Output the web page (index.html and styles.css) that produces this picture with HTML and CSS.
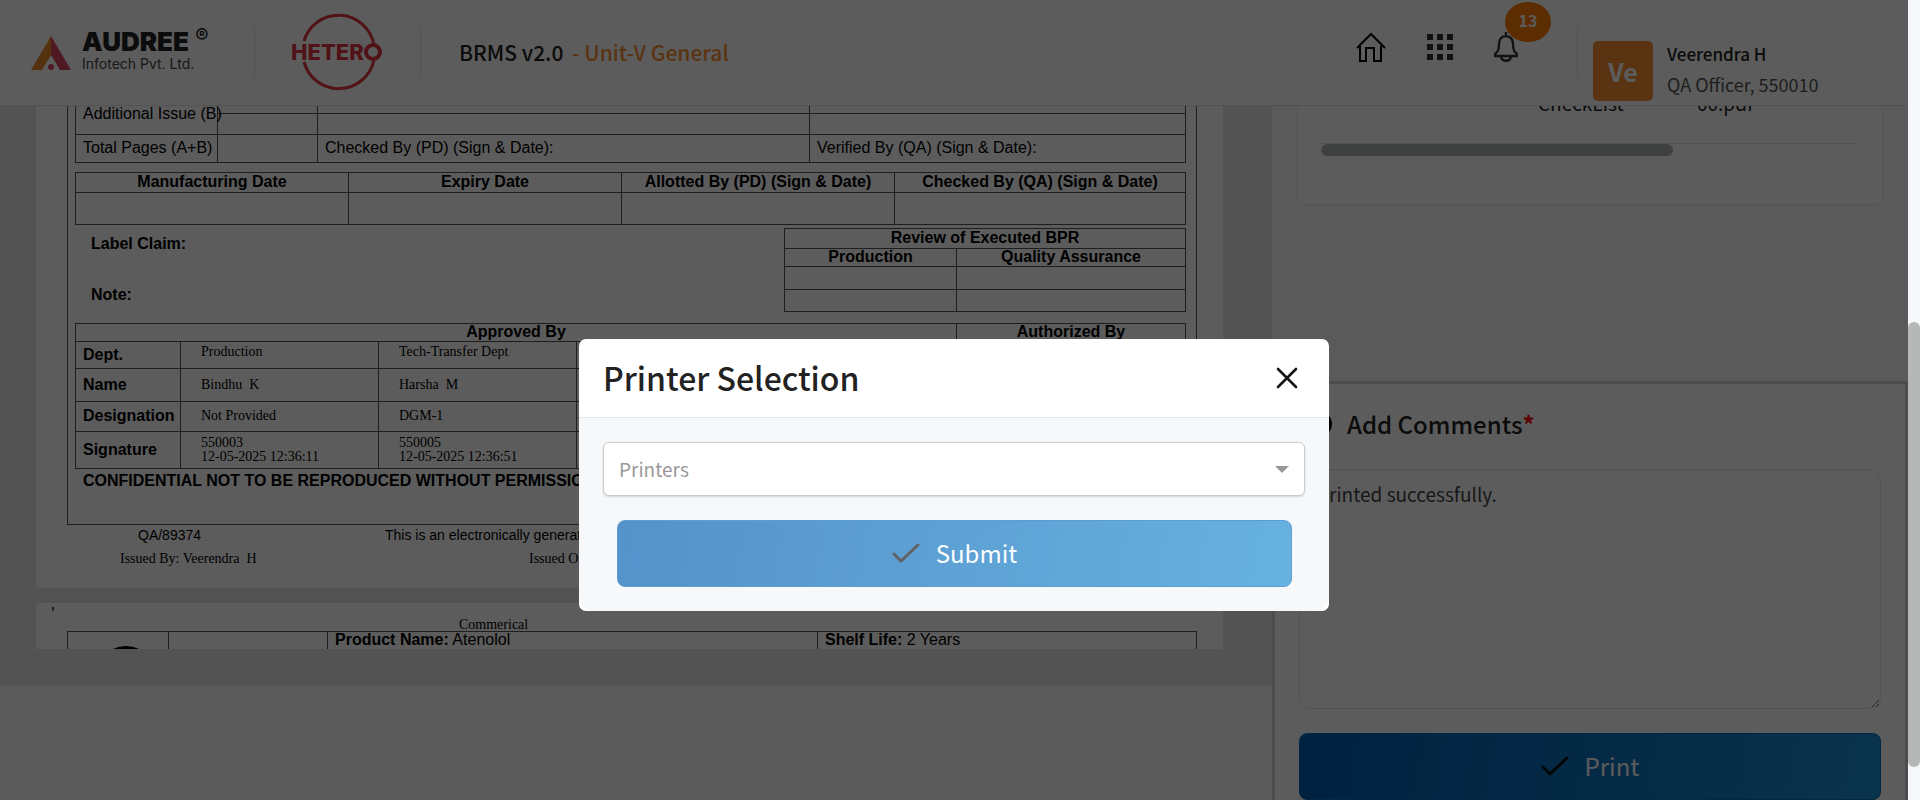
FILE: index.html
```html
<!DOCTYPE html>
<html lang="en">
<head>
<meta charset="utf-8">
<title>BRMS v2.0 - Printer Selection</title>
<link rel="stylesheet" href="styles.css">
</head>
<body>
<div class="app">
  <header class="topbar">
    <a class="audree" href="#" aria-label="Audree Infotech">
      <svg class="audree-mark" viewBox="0 0 40 34" width="40" height="34" aria-hidden="true">
        <path d="M20 0 0 34h11l9-15z" fill="#e88a2e"/>
        <path d="M20 0v19l9 15h11z" fill="#d9475a"/>
        <circle cx="20" cy="31" r="3" fill="#d9475a"/>
      </svg>
      <span class="audree-name"><b>AUDREE</b><small>Infotech Pvt. Ltd.</small></span>
      <sup class="audree-reg">®</sup>
    </a>
    <span class="rule"></span>
    <svg class="hetero" viewBox="0 0 90 78" width="90" height="78" role="img" aria-label="Hetero">
      <g fill="none" stroke="#e03542" stroke-width="3">
        <path d="M12 28A36 36 0 0 1 82 32"/>
        <path d="M82 47A36 36 0 0 1 12 49"/>
        <circle cx="81" cy="39" r="7" stroke-width="4"/>
      </g>
      <text x="-1" y="47" class="hetero-text">HETER</text>
    </svg>
    <span class="rule"></span>
    <h1 class="product">BRMS v2.0 <span>- Unit-V General</span></h1>
    <nav class="tools">
      <a href="#" aria-label="Home"><svg viewBox="0 0 30 30" width="30" height="30" fill="none" stroke="#000" stroke-width="2"><path d="M1 16 15 2l14 14M4 14v15h6V16h8v13h7V14"/></svg></a>
      <a href="#" aria-label="Applications"><svg viewBox="0 0 26 26" width="26" height="26" fill="#333"><path d="M0 0h6v6H0zM10 0h6v6h-6zM20 0h6v6h-6zM0 10h6v6H0zM10 10h6v6h-6zM20 10h6v6h-6zM0 20h6v6H0zM10 20h6v6h-6zM20 20h6v6h-6z"/></svg></a>
      <a href="#" class="bell" aria-label="Notifications"><svg viewBox="0 0 24 30" width="24" height="30" fill="none" stroke="#333" stroke-width="2.4" stroke-linejoin="round"><path d="M12 0v4M12 4c-4 0-7 3-7 8 0 6-1 8-4 10v2h22v-2c-3-2-4-4-4-10 0-5-3-8-7-8zM7 25c1 5 9 5 10 0"/></svg><span class="badge">13</span></a>
    </nav>
    <span class="rule"></span>
    <div class="user">
      <span class="avatar">Ve</span>
      <div class="who"><strong>Veerendra H</strong><span>QA Officer, 550010</span></div>
    </div>
  </header>

  <main class="content">
    <section class="left">
      <div class="viewer">
        <article class="sheet first">
          <div class="frame">
            <table class="grid issue">
              <colgroup><col class="w142"><col class="w100"><col class="w492"><col></colgroup>
              <tr class="r7"><td rowspan="2">Additional Issue (B)</td><td></td><td></td><td></td></tr>
              <tr class="r21"><td></td><td></td><td></td></tr>
              <tr class="r28"><td>Total Pages (A+B)</td><td></td><td>Checked By (PD) (Sign &amp; Date):</td><td>Verified By (QA) (Sign &amp; Date):</td></tr>
            </table>
            <table class="grid dates">
              <colgroup><col class="w273"><col class="w273"><col class="w273"><col></colgroup>
              <tr class="r20"><th>Manufacturing Date</th><th>Expiry Date</th><th>Allotted By (PD) (Sign &amp; Date)</th><th>Checked By (QA) (Sign &amp; Date)</th></tr>
              <tr class="r32"><td></td><td></td><td></td><td></td></tr>
            </table>
            <div class="review-row">
              <div class="notes"><b>Label Claim:</b><b>Note:</b></div>
              <table class="grid review">
                <colgroup><col class="w172"><col></colgroup>
                <tr class="r20"><th colspan="2">Review of Executed BPR</th></tr>
                <tr class="r18"><th>Production</th><th>Quality Assurance</th></tr>
                <tr class="r23"><td></td><td></td></tr>
                <tr class="r22"><td></td><td></td></tr>
              </table>
            </div>
            <table class="grid approve">
              <colgroup><col class="w105"><col class="w198"><col class="w198"><col><col class="w229"></colgroup>
              <tr class="r18"><th colspan="4">Approved By</th><th>Authorized By</th></tr>
              <tr class="r27"><th scope="row">Dept.</th><td class="up">Production</td><td class="up">Tech-Transfer Dept</td><td></td><td></td></tr>
              <tr class="r33"><th scope="row">Name</th><td>Bindhu&nbsp; K</td><td>Harsha&nbsp; M</td><td></td><td></td></tr>
              <tr class="r30"><th scope="row">Designation</th><td>Not Provided</td><td>DGM-1</td><td></td><td></td></tr>
              <tr class="r37"><th scope="row">Signature</th><td>550003<br>12-05-2025 12:36:11</td><td>550005<br>12-05-2025 12:36:51</td><td></td><td></td></tr>
            </table>
            <p class="confidential">CONFIDENTIAL NOT TO BE REPRODUCED WITHOUT PERMISSION</p>
          </div>
          <div class="foot sans"><span>QA/89374</span><span>This is an electronically generated document</span></div>
          <div class="foot serif"><span>Issued By: Veerendra&nbsp; H</span><span>Issued On: 12-05-2025</span></div>
        </article>
        <article class="sheet second">
          <div class="cut-line">,</div>
          <p class="batch-type">Commerical</p>
          <table class="grid head">
            <colgroup><col class="w101"><col class="w159"><col class="w490"><col></colgroup>
            <tr><td><svg class="seal" viewBox="0 0 58 58" width="58" height="58" aria-hidden="true"><circle cx="29" cy="29" r="26" fill="none" stroke="#000" stroke-width="6"/></svg></td><td></td><td><b>Product Name:</b> Atenolol</td><td><b>Shelf Life:</b> 2 Years</td></tr>
          </table>
        </article>
      </div>
    </section>

    <section class="right">
      <div class="files">
        <div class="file-card">
          <div class="file-row"><span>CheckList</span><span>00.pdf</span></div>
          <div class="hbar"></div>
        </div>
      </div>
      <form class="comments">
        <div class="comments-title">
          <svg viewBox="0 0 24 24" width="24" height="24" aria-hidden="true"><circle cx="12" cy="12" r="12"/></svg>
          <label for="comment">Add Comments<span>*</span></label>
        </div>
        <textarea id="comment">Printed successfully.</textarea>
        <button type="button" class="primary"><svg viewBox="0 0 28 20" width="28" height="20" fill="none" stroke="#111" stroke-width="3" stroke-linecap="round" stroke-linejoin="round" aria-hidden="true"><path d="M2 11l7 7L26 2"/></svg>Print</button>
      </form>
    </section>
  </main>

  <div class="scrim">
    <div class="modal" role="dialog" aria-modal="true" aria-labelledby="dlg-title">
      <div class="modal-head">
        <h2 id="dlg-title">Printer Selection</h2>
        <button type="button" class="close" aria-label="Close"><svg viewBox="0 0 22 22" width="22" height="22" fill="none" stroke="#151515" stroke-width="2.6" stroke-linecap="round"><path d="M2 2l18 18M20 2 2 20"/></svg></button>
      </div>
      <form class="modal-body">
        <div class="select-wrap"><select aria-label="Printers"><option>Printers</option></select></div>
        <button type="button" class="primary" disabled><svg viewBox="0 0 28 20" width="28" height="20" fill="none" stroke="#111" stroke-width="3" stroke-linecap="round" stroke-linejoin="round" aria-hidden="true"><path d="M2 11l7 7L26 2"/></svg>Submit</button>
      </form>
    </div>
  </div>
</div>
<div class="scrollbar"><div class="thumb"></div></div>
</body>
</html>
```
FILE: styles.css
```css
* { box-sizing: border-box; }
body {
  margin: 0;
  height: 100vh;
  display: flex;
  overflow: hidden;
  background: #f8f8fa;
  color: #222;
  font-family: "Noto Sans CJK SC", "Open Sans", sans-serif;
}
a { color: inherit; text-decoration: none; }
h1, h2, p { margin: 0; }

.app { position: relative; flex: 1; min-width: 0; display: flex; flex-direction: column; }
.scrollbar { width: 12px; padding-top: 322px; background: #f6f8fb; }
.thumb { height: 445px; border-radius: 6px; background: #b5b8b7; }

/* Top bar */
.topbar {
  height: 106px;
  flex: none;
  display: flex;
  align-items: center;
  padding-left: 31px;
  background: #fff;
  border-bottom: 1px solid #e4e4e4;
}
.rule { width: 1px; height: 53px; background: #e4e4e4; }
.audree { display: flex; width: 223px; align-items: center; }
.audree-name { display: flex; flex-direction: column; margin-left: 11px; padding-bottom: 2px; font-family: Inter, sans-serif; }
.audree-name b { font-size: 26px; line-height: 24px; font-weight: 900; }
.audree-name small { font-size: 14px; line-height: 20px; color: #444; }
.audree-reg { align-self: flex-start; font: 700 20px/12px Inter, sans-serif; margin-left: 1px; }
.hetero { margin: 0 38px 2px 37px; }
.hetero-text { font: 800 22px Inter, sans-serif; fill: #e03542; }
.product { margin-left: 38px; padding-bottom: 2px; font-size: 21px; line-height: 32px; font-weight: 500; white-space: pre; }
.product span { color: #fa8e32; margin-left: 4px; }
.tools { margin-left: auto; display: flex; align-items: center; gap: 41px; margin-right: 59px; padding-bottom: 12px; }
.tools a { display: block; position: relative; }
.tools svg { display: block; }
.badge {
  position: absolute;
  left: 11px;
  top: -30px;
  width: 46px;
  height: 40px;
  border-radius: 50%;
  background: #ff7d00;
  color: #fff;
  font-size: 16px;
  line-height: 36px;
  font-weight: 700;
  text-align: center;
}
.user { display: flex; align-items: center; width: 330px; padding: 36px 0 0 15px; gap: 14px; }
.avatar {
  width: 60px; height: 60px; border-radius: 5px;
  background: #fa8e32; color: #fff;
  font-size: 25px; line-height: 60px; font-weight: 700; text-align: center;
}
.who { padding-bottom: 4px; }
.who strong, .who span { display: block; font-size: 18px; line-height: 30px; }
.who strong { font-weight: 500; font-size: 17px; }
.who span { color: #555; }

/* Columns */
.content { flex: 1; min-height: 0; display: flex; overflow: hidden; }
.left { flex: 2; min-width: 0; background: #fafafa; }
.right { flex: 1; min-width: 0; display: flex; flex-direction: column; background: #f8f8fa; }
.viewer { height: 579px; padding: 0 49px 36px 36px; background: #e6e6e6; display: flex; flex-direction: column; gap: 15px; }
.sheet { background: #fff; color: #000; font: 16px/18px "Liberation Sans", sans-serif; padding: 0 26px 0 31px; overflow: hidden; }
.first { height: 482px; flex: none; }
.second { flex: 1; }
.frame { height: 419px; border: 1px solid #555; border-top: 0; padding: 0 10px 0 7px; }

/* Document tables */
.grid { width: 100%; table-layout: fixed; border-collapse: collapse; }
.grid td, .grid th { border: 1px solid #555; padding: 0 7px; white-space: nowrap; line-height: 16px; }
.issue tr:first-child td { border-top: 0; }
.issue td[rowspan] { vertical-align: top; }
.dates { margin-top: 9px; }
.r7 { height: 7px; } .r18 { height: 18px; } .r20 { height: 20px; } .r21 { height: 21px; }
.r22 { height: 22px; } .r23 { height: 23px; } .r27 { height: 27px; } .r28 { height: 28px; }
.r30 { height: 30px; } .r32 { height: 32px; } .r33 { height: 33px; } .r37 { height: 37px; }
.w100 { width: 100px; } .w101 { width: 101px; } .w105 { width: 105px; } .w142 { width: 142px; }
.w159 { width: 159px; } .w172 { width: 172px; } .w198 { width: 198px; } .w229 { width: 229px; }
.w273 { width: 273px; } .w490 { width: 490px; } .w492 { width: 492px; }
.review-row { display: flex; justify-content: space-between; margin-top: 3px; height: 95px; }
.notes { display: flex; flex-direction: column; gap: 33px; padding: 7px 0 0 16px; }
.grid.review { width: 402px; height: 84px; }
.approve th[scope] { text-align: left; }
.grid.approve td { font: 14px/14px "Liberation Serif", serif; padding-left: 20px; }
.grid.approve td.up { padding-bottom: 5px; }
.confidential { padding: 3px 8px; font-weight: 700; white-space: nowrap; }
.foot { display: flex; white-space: nowrap; font-size: 14px; line-height: 20px; }
.foot.sans span:first-child { width: 247px; margin-left: 71px; }
.foot.serif { font-family: "Liberation Serif", serif; line-height: 28px; }
.foot.serif span:first-child { width: 409px; margin-left: 53px; }
.cut-line { height: 16px; margin: 0 -16px; font: 16px/1px "Liberation Serif", serif; }
.batch-type { margin-left: 392px; font: 14px/12px "Liberation Serif", serif; }
.head td { vertical-align: top; }
.seal { display: block; margin: 14px 0 0 22px; }

/* Right column */
.files { height: 275px; flex: none; padding: 0 25px; }
.file-card { height: 99px; padding: 0 23px; background: #fff; border: 1px solid #ebebeb; border-top: 0; border-radius: 0 0 6px 6px; overflow: hidden; }
.file-row { display: flex; margin-top: -16px; height: 54px; padding-left: 217px; border-bottom: 1px solid #e4e4e4; font-size: 19px; line-height: 26px; }
.file-row span { width: 159px; }
.hbar { width: 352px; height: 12px; border-radius: 6px; background: #afb5b2; }
.comments { flex: 1; padding: 0 24px; background: #fff; border: 3px solid #d6d6d6; border-bottom: 0; }
.comments-title { display: flex; align-items: center; gap: 15px; padding: 0 0 6px 9px; height: 85px; font-size: 24px; font-weight: 500; }
.comments-title label { line-height: 32px; }
.comments-title span { color: #f00; font-weight: 700; }
.comments textarea {
  display: block; width: 100%; height: 240px; margin: 0 0 24px;
  padding: 8px 17px; border: 1px solid #e4e4e4; border-radius: 12px;
  background: #fff; color: #444; font: inherit; font-size: 19px; line-height: 32px; resize: vertical;
}
.primary {
  display: flex; width: 100%; height: 67px; align-items: center; justify-content: center; gap: 16px;
  padding: 0 0 2px; border: 1px solid #0a6fc0; border-radius: 8px;
  background: linear-gradient(100deg, #005bb1, #1b8dd2);
  color: #fff; font: inherit; font-size: 24px;
}

/* Dialog */
.scrim { position: absolute; inset: 0; display: flex; align-items: center; justify-content: center; padding-top: 150px; background: rgba(0, 0, 0, .64); }
.modal { width: 750px; background: #fff; border-radius: 7px; overflow: hidden; }
.modal-head { display: flex; align-items: center; justify-content: space-between; height: 79px; padding: 0 31px 0 24px; border-bottom: 1px solid #e4e7ea; }
.modal-head h2 { padding-bottom: 3px; font-size: 32px; line-height: 48px; font-weight: 500; }
.close { padding: 0; border: 0; background: none; }
.close svg { display: block; }
.modal-body { padding: 24px; background: #f6f8fa; border-radius: 0 0 14px 14px; }
.select-wrap { position: relative; }
.select-wrap::after {
  content: ""; position: absolute; right: 16px; top: 24px;
  border: 7px solid transparent; border-top-color: #999; border-bottom: 0;
}
.modal-body select {
  display: block; width: 100%; height: 54px; appearance: none; padding: 0 15px 2px;
  border: 1px solid #c9cbcd; border-radius: 6px; background: #fff;
  box-shadow: 0 1px 2px rgba(0, 0, 0, .15); color: #999; font: inherit; font-size: 19px;
}
.modal-body .primary { width: auto; min-width: calc(100% - 27px); margin: 24px 13px 0 14px; opacity: .65; }
```
